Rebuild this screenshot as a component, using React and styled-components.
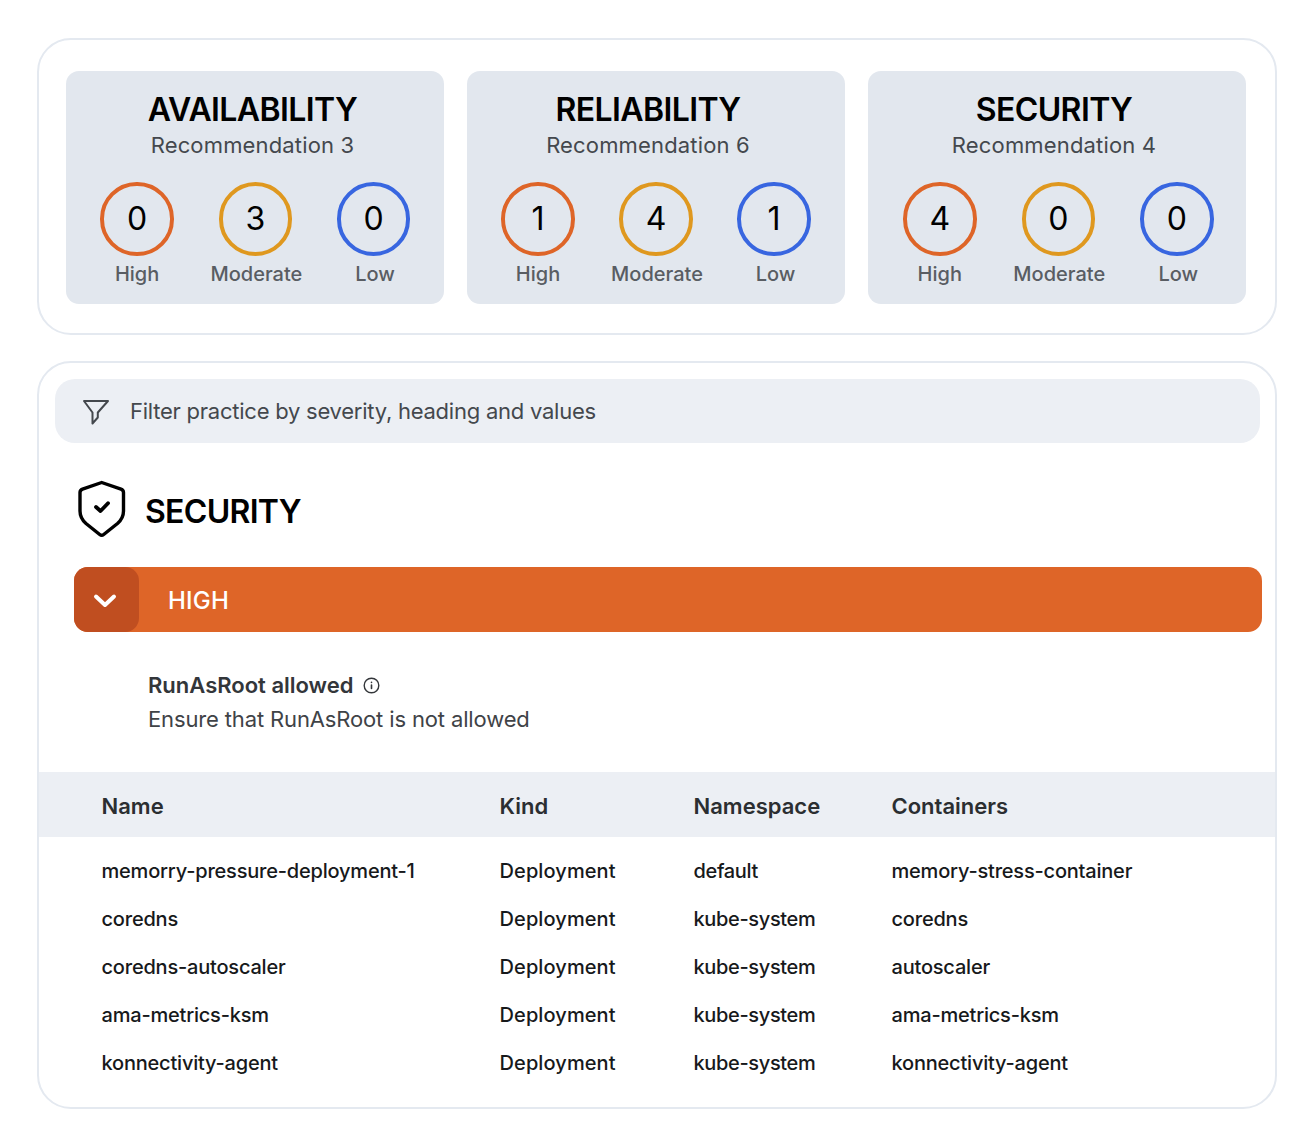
import React from "react";
import styled, { createGlobalStyle } from "styled-components";

const Global = createGlobalStyle`
  html, body { margin: 0; padding: 0; background: #fff; }
  body { font-family: Inter, "Noto Sans", sans-serif; color: #000; }
  * { box-sizing: border-box; }
`;

const Page = styled.div`
  width: 1314px;
  height: 1144px;
  padding: 38px 37px 0 37px;
  display: flex;
  flex-direction: column;
  gap: 26px;
`;
const Panel = styled.section`
  border: 2px solid #e4e9f0;
  border-radius: 34px;
  background: #fff;
  overflow: hidden;
`;
const SummaryPanel = styled(Panel)`
  height: 297px;
  padding: 31px 27px 0 27px;
  display: grid;
  grid-template-columns: repeat(3, 378px);
  column-gap: 23px;
  align-items: start;
`;
const Card = styled.div`
  height: 232.5px;
  background: #e2e7ee;
  border-radius: 13px;
  padding-top: 21px;
  text-align: center;
`;
const CardHeader = styled.div`
  padding-right: ${(p) => p.$inset}px;
`;
const CardTitle = styled.h2`
  margin: 0;
  font-size: 32px;
  line-height: 36px;
  font-weight: 600;
  color: #000;
  letter-spacing: -0.6px;
`;
const CardSub = styled.div`
  font-size: 22px;
  line-height: 34px;
  letter-spacing: 0.16px;
  color: #44484d;
`;
const Levels = styled.div`
  display: grid;
  grid-template-columns: repeat(3, ${(p) => p.$col}px);
  padding-left: ${(p) => p.$pad}px;
  margin-top: 20px;
`;
const Level = styled.div`
  display: flex;
  flex-direction: column;
  align-items: center;
`;
const Ring = styled.div`
  width: 73.5px;
  height: 73.5px;
  border-radius: 50%;
  border: 4px solid ${(p) => p.$color};
  display: flex;
  align-items: center;
  justify-content: center;
  font-size: 32px;
  color: #000;
`;
const LevelName = styled.div`
  margin-top: 3px;
  padding-left: ${(p) => p.$nudge}px;
  font-size: 20px;
  line-height: 30px;
  font-weight: 500;
  color: #595d63;
`;

const DetailPanel = styled(Panel)`
  height: 748px;
  display: flex;
  flex-direction: column;
`;
const FilterBar = styled.div`
  margin: 16px 15px 0 16px;
  height: 64px;
  border-radius: 20px;
  background: #eceff4;
  display: flex;
  align-items: center;
  gap: 20px;
  padding-left: 27px;
`;
const FilterText = styled.span`
  font-size: 22px;
  letter-spacing: -0.24px;
  color: #44484d;
  padding-bottom: 1px;
`;
const FilterGlyph = styled.svg`
  margin-top: 3px;
`;
const Heading = styled.div`
  display: flex;
  align-items: center;
  gap: 18px;
  margin: 37px 0 0 38px;
  height: 58px;
`;
const HeadingText = styled.h2`
  margin: 0;
  padding-top: 5px;
  font-size: 32px;
  font-weight: 600;
  letter-spacing: -0.7px;
  color: #000;
`;
const SeverityBar = styled.div`
  margin: 29px 0 0 35px;
  width: 1188px;
  height: 65px;
  background: #de6528;
  border-radius: 14px;
  display: flex;
  align-items: center;
  color: #fff;
  font-size: 24px;
  font-weight: 500;
  letter-spacing: 0.2px;
`;
const Toggle = styled.div`
  width: 64.5px;
  height: 65px;
  background: #c04e20;
  border-radius: 14px;
  display: flex;
  align-items: center;
  justify-content: center;
  margin-right: 29.5px;
`;
const SeverityLabel = styled.span`
  padding-top: 2px;
`;
const ChevronGlyph = styled.svg`
  margin: 3px 2px 0 0;
`;
const Practice = styled.div`
  margin: 36px 0 0 109px;
`;
const PracticeTitle = styled.div`
  display: flex;
  align-items: center;
  gap: 10px;
  font-size: 22px;
  line-height: 34px;
  font-weight: 600;
  color: #33363a;
`;
const PracticeText = styled.div`
  font-size: 22px;
  line-height: 34px;
  letter-spacing: -0.14px;
  color: #3f4347;
`;
const gridCols = "398px 194px 198px 1fr";
const TableHead = styled.div`
  margin-top: 36px;
  height: 65px;
  padding-top: 2px;
  background: #eceff4;
  display: grid;
  grid-template-columns: ${gridCols};
  align-items: center;
  padding-left: 62.5px;
  font-size: 22px;
  font-weight: 600;
  color: #2b2e31;
`;
const TableBody = styled.div`
  padding-top: 10px;
`;
const Row = styled.div`
  display: grid;
  grid-template-columns: ${gridCols};
  align-items: center;
  height: 48px;
  padding-left: 62.5px;
  font-size: 20px;
  font-weight: 500;
  letter-spacing: -0.2px;
  color: #17191b;
`;
const KindCell = styled.div`
  letter-spacing: 0.1px;
`;
const NamespaceCell = styled.div`
  letter-spacing: -0.35px;
`;

const cards = [
  { title: "AVAILABILITY", rec: 3, v: [0, 3, 0], inset: 5, col: 118.25, pad: 12 },
  { title: "RELIABILITY", rec: 6, v: [1, 4, 1], inset: 16, col: 118, pad: 12 },
  { title: "SECURITY", rec: 4, v: [4, 0, 0], inset: 6, col: 118.5, pad: 12.5 },
];
const levels = [
  { name: "High", color: "#de6528", nudge: 0 },
  { name: "Moderate", color: "#df981f", nudge: 2 },
  { name: "Low", color: "#3866e0", nudge: 3 },
];
const rows = [
  ["memorry-pressure-deployment-1", "Deployment", "default", "memory-stress-container"],
  ["coredns", "Deployment", "kube-system", "coredns"],
  ["coredns-autoscaler", "Deployment", "kube-system", "autoscaler"],
  ["ama-metrics-ksm", "Deployment", "kube-system", "ama-metrics-ksm"],
  ["konnectivity-agent", "Deployment", "kube-system", "konnectivity-agent"],
];

const FilterIcon = () => (
  <FilterGlyph width="28" height="30" viewBox="0 0 28 30" fill="none" stroke="#44484d" strokeWidth="2" strokeLinejoin="round" strokeLinecap="round">
    <path d="M2 3H26L15.8 14.5V19.5L10.5 25.5V14.5Z" />
  </FilterGlyph>
);
const ShieldIcon = () => (
  <svg width="50" height="58" viewBox="0 0 50 58" fill="none" stroke="#000" strokeLinejoin="round" strokeLinecap="round">
    <path strokeWidth="3.4" d="M24.7 2.5 44 9.2c1.6.6 2.5 1.8 2.5 3.4V31c0 5-2 9-6 12.5L26.7 54.5c-1.2 1-2.800 1-4 0L9 43.500c-4-3.500-6-7.500-6-12.500V12.600c0-1.600.9-2.800 2.500-3.400z" />
    <path strokeWidth="3.8" d="M19 27l4.500 4L31 23.200" />
  </svg>
);
const Chevron = () => (
  <ChevronGlyph width="24" height="16" viewBox="0 0 24 16" fill="none" stroke="#fff" strokeWidth="4" strokeLinecap="round" strokeLinejoin="round">
    <path d="M3 3.500l9 8.500 9-8.500" />
  </ChevronGlyph>
);
const InfoIcon = () => (
  <svg width="17" height="17" viewBox="0 0 17 17" fill="none" stroke="#33363a" strokeWidth="1.4" strokeLinecap="round">
    <circle cx="8.5" cy="8.5" r="7.3" />
    <path strokeWidth="1.6" d="M8.5 8v3.500M8.500 5.200v.2" />
  </svg>
);

export default function App() {
  return (
    <Page>
      <Global />
      <SummaryPanel>
        {cards.map((c) => (
          <Card key={c.title}>
            <CardHeader $inset={c.inset}>
              <CardTitle>{c.title}</CardTitle>
              <CardSub>Recommendation {c.rec}</CardSub>
            </CardHeader>
            <Levels $col={c.col} $pad={c.pad}>
              {levels.map((l, i) => (
                <Level key={l.name}>
                  <Ring $color={l.color}>{c.v[i]}</Ring>
                  <LevelName $nudge={l.nudge}>{l.name}</LevelName>
                </Level>
              ))}
            </Levels>
          </Card>
        ))}
      </SummaryPanel>
      <DetailPanel>
        <FilterBar>
          <FilterIcon />
          <FilterText>Filter practice by severity, heading and values</FilterText>
        </FilterBar>
        <Heading>
          <ShieldIcon />
          <HeadingText>SECURITY</HeadingText>
        </Heading>
        <SeverityBar>
          <Toggle><Chevron /></Toggle>
          <SeverityLabel>HIGH</SeverityLabel>
        </SeverityBar>
        <Practice>
          <PracticeTitle>RunAsRoot allowed <InfoIcon /></PracticeTitle>
          <PracticeText>Ensure that RunAsRoot is not allowed</PracticeText>
        </Practice>
        <TableHead>
          <div>Name</div><div>Kind</div><div>Namespace</div><div>Containers</div>
        </TableHead>
        <TableBody>
          {rows.map((r) => (
            <Row key={r[0]}>
              <div>{r[0]}</div>
              <KindCell>{r[1]}</KindCell>
              <NamespaceCell>{r[2]}</NamespaceCell>
              <div>{r[3]}</div>
            </Row>
          ))}
        </TableBody>
      </DetailPanel>
    </Page>
  );
}
